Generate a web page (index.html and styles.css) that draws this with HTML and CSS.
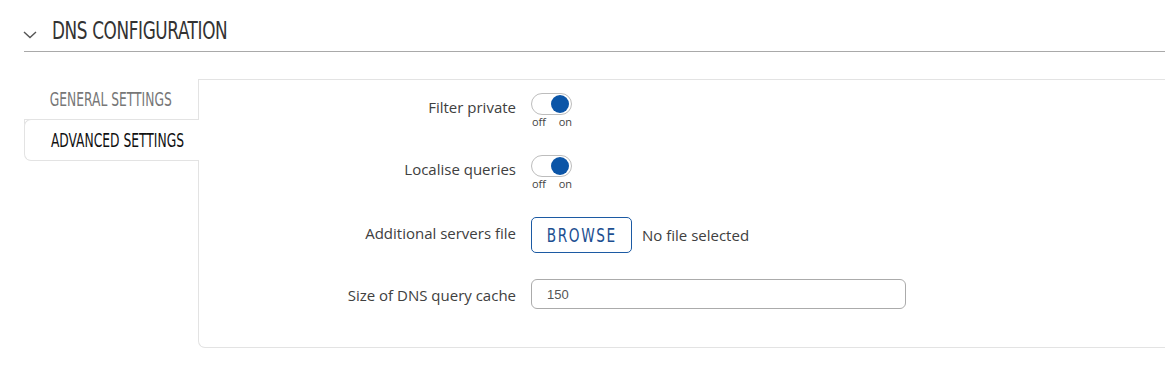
FILE: index.html
```html
<!DOCTYPE html>
<html lang="en">
<head>
    <meta charset="UTF-8">
    <title>DNS configuration</title>
    <link rel="stylesheet" href="styles.css">
</head>
<body>
    <div class="section">
        <div class="section-head">
            <svg class="chevron" width="14" height="8" viewBox="0 0 14 8">
                <path d="M1 1 L7 6.5 L13 1" fill="none" stroke="#555" stroke-width="1.4"/>
            </svg>
            <h2 class="section-title"><span class="narrow">DNS CONFIGURATION</span></h2>
        </div>

        <div class="section-body">
            <div class="tabs">
                <div class="tab"><span class="narrow">GENERAL SETTINGS</span></div>
                <div class="tab active"><span class="narrow">ADVANCED SETTINGS</span></div>
            </div>

            <div class="panel">
                <div class="row">
                    <label class="label label-toggle">Filter private</label>
                    <div class="control">
                        <div class="switch on"><span class="knob"></span></div>
                        <div class="switch-text"><span>off</span><span>on</span></div>
                    </div>
                </div>
                <div class="row">
                    <label class="label label-toggle">Localise queries</label>
                    <div class="control">
                        <div class="switch on"><span class="knob"></span></div>
                        <div class="switch-text"><span>off</span><span>on</span></div>
                    </div>
                </div>
                <div class="row">
                    <label class="label">Additional servers file</label>
                    <div class="control file-control">
                        <button class="browse"><span class="narrow">BROWSE</span></button>
                        <span class="file-name">No file selected</span>
                    </div>
                </div>
                <div class="row last">
                    <label class="label label-input">Size of DNS query cache</label>
                    <div class="control">
                        <input class="text-input" type="text" value="150">
                    </div>
                </div>
            </div>
        </div>
    </div>
</body>
</html>
```

FILE: styles.css
```css
body {
    margin: 0;
    font-family: "Open Sans", "Liberation Sans", sans-serif;
    color: #404040;
    background: #fff;
}

/* no condensed face installed, squeeze the caps headings instead */
.narrow {
    display: inline-block;
    transform: scaleX(0.8);
    white-space: nowrap;
}

.section {
    padding-left: 24px;
}

.section-head {
    display: flex;
    align-items: center;
    height: 51px;
    border-bottom: 1px solid #a9a9a9;
}

.chevron {
    margin-top: 19px;
    margin-left: -1px;
}

.section-title {
    margin: 9px 0 0 15px;
    font-family: "DejaVu Sans Condensed", "Liberation Sans", sans-serif;
    font-weight: 400;
    font-size: 25px;
    color: #333;
    letter-spacing: -0.5px;
}

.section-title .narrow {
    transform: scaleX(0.75);
    transform-origin: left center;
}

.section-body {
    display: flex;
    margin-top: 27px;
}

.tabs {
    width: 174px;
    flex-shrink: 0;
    position: relative;
    z-index: 1;
}

.tab {
    height: 40px;
    line-height: 40px;
    text-align: center;
    font-family: "DejaVu Sans Condensed", "Liberation Sans", sans-serif;
    font-size: 19px;
    color: #777;
    border-bottom: 1px solid #e3e3e3;
}

.tab .narrow {
    transform: scaleX(0.72);
}

.tab.active {
    color: #111;
    background: #fff;
    border: 1px solid #e3e3e3;
    border-top: none;
    border-right: none;
    border-radius: 0 0 0 7px;
    margin-right: -1px;
    position: relative;
}

.tab.active::before {
    content: '';
    position: absolute;
    left: -1px;
    top: -1px;
    width: 8px;
    height: 8px;
    border-top: 1px solid #e3e3e3;
    border-left: 1px solid #e3e3e3;
    border-radius: 7px 0 0 0;
    background: #fff;
}

.panel {
    flex: 1;
    border: 1px solid #e3e3e3;
    border-right: none;
    border-radius: 0 0 0 7px;
    padding: 13px 0 38px;
}

.row {
    display: flex;
    align-items: flex-start;
    margin-bottom: 26px;
}

.row.last {
    margin-bottom: 0;
}

.label {
    flex-shrink: 0;
    width: 332px;
    box-sizing: border-box;
    padding-top: 6px;
    padding-right: 15px;
    text-align: right;
    font-size: 15px;
    line-height: 20px;
}

.label-toggle {
    padding-top: 4px;
}

.switch {
    width: 41px;
    height: 22px;
    box-sizing: border-box;
    border: 1px solid #bdbdbd;
    border-radius: 11px;
    background: #fff;
    position: relative;
}

.knob {
    position: absolute;
    top: 1px;
    right: 2px;
    width: 18px;
    height: 18px;
    border-radius: 50%;
    background: #0b55a7;
}

.switch-text {
    display: flex;
    justify-content: space-between;
    width: 40px;
    padding-left: 1px;
    font-size: 11px;
    line-height: 14px;
    color: #444;
}

.file-control {
    display: flex;
    align-items: center;
}

.browse {
    width: 101px;
    height: 36px;
    box-sizing: border-box;
    border: 1px solid #1c5aa3;
    border-radius: 5px;
    background: #fff;
    color: #1d4f91;
    font-family: "DejaVu Sans Condensed", "Liberation Sans", sans-serif;
    font-size: 19px;
    letter-spacing: 2px;
    padding: 0;
}

.file-name {
    margin-left: 10px;
    font-size: 15px;
    color: #404040;
}

.text-input {
    width: 375px;
    height: 30px;
    box-sizing: border-box;
    border: 1px solid #ababab;
    border-radius: 6px;
    padding: 0 15px;
    font-family: "Liberation Sans", sans-serif;
    font-size: 13px;
    color: #555;
    outline: none;
}
```
